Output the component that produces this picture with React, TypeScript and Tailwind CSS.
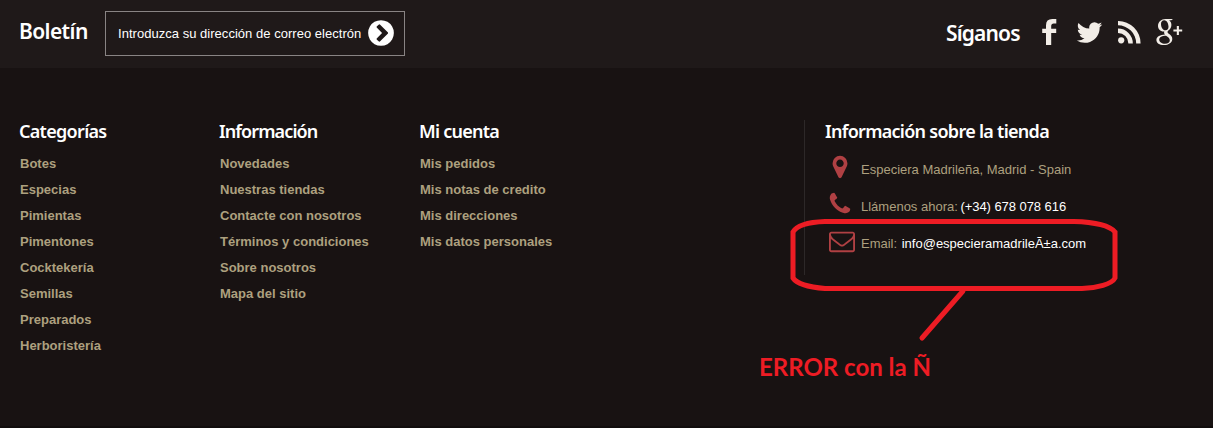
import React from "react";

const HEAD = "font-['Noto_Sans',sans-serif] font-semibold text-white whitespace-nowrap";

function Icon({ d, className }: { d: string; className: string }) {
  return (
    <svg viewBox="0 0 1792 1792" fill="currentColor" className={className}>
      <path d={d} />
    </svg>
  );
}

const CHEVRON =
  "M845 1395l454-454q19-19 19-45t-19-45l-454-454q-19-19-45-19t-45 19l-102 102q-19 19-19 45t19 45l307 307-307 307q-19 19-19 45t19 45l102 102q19 19 45 19t45-19zm819-499q0 209-103 385.5t-279.5 279.5-385.5 103-385.5-103-279.5-279.5-103-385.5 103-385.5 279.5-279.5 385.5-103 385.5 103 279.5 279.5 103 385.5z";
const TWITTER =
  "M1684 408q-67 98-162 167 1 14 1 42 0 130-38 259.5t-115.5 248.5-184.5 210.5-258 146-323 54.5q-271 0-496-145 35 4 78 4 225 0 401-138-105-2-188-64.5t-114-159.5q33 5 61 5 43 0 85-11-112-23-185.5-111.5t-73.5-205.5v-4q68 38 146 41-66-44-105-115t-39-154q0-88 44-163 121 149 294.5 238.5t371.5 99.5q-8-38-8-74 0-134 94.5-228.5t228.5-94.5q140 0 236 102 109-21 205-78-37 115-142 178 93-10 186-50z";
const MARKER =
  "M1152 640q0-106-75-181t-181-75-181 75-75 181 75 181 181 75 181-75 75-181zm256 0q0 109-33 179l-364 774q-16 33-47.5 52t-67.5 19-67.5-19-46.5-52l-365-774q-33-70-33-179 0-212 150-362t362-150 362 150 150 362z";
const PHONE =
  "M1600 1240q0 27-10 70.5t-21 68.5q-21 50-122 106-94 51-186 51-27 0-53-3.5t-57.5-12.5-47-14.5-55.5-20.5-49-18q-98-35-175-83-127-79-264-216t-216-264q-48-77-83-175-3-9-18-49t-20.5-55.5-14.5-47-12.5-57.5-3.5-53q0-92 51-186 56-101 106-122 25-11 68.5-21t70.5-10q14 0 21 3 18 6 53 76 11 19 30 54t35 63.5 31 53.5q3 4 17.5 25t21.5 35.5 7 28.5q0 20-28.5 50t-62 55-62 53-28.5 46q0 9 5 22.5t8.5 20.5 14 24 11.5 19q76 137 174 235t235 174q2 1 19 11.5t24 14 20.5 8.5 22.5 5q18 0 46-28.5t53-62 55-62 50-28.5q14 0 28.5 7t35.5 21.5 25 17.5q25 15 53.5 31t63.5 35 54 30q70 35 76 53 3 7 3 21z";
const ENVELOPE =
  "M1664 1504v-768q-32 36-69 66-268 206-426 338-51 43-83 67t-86.5 48.5-102.5 24.5h-2q-48 0-102.5-24.5t-86.5-48.5-83-67q-158-132-426-338-37-30-69-66v768q0 13 9.5 22.5t22.5 9.5h1472q13 0 22.5-9.5t9.5-22.5zm0-1051v-24.5l-.5-13-3-12.5-5.5-9-9-7.5-14-2.5h-1472q-13 0-22.5 9.5t-9.5 22.5q0 168 147 284 193 152 401 317 6 5 35 29.5t46 37.5 44.5 31.5 50.5 27.5 43 9h2q20 0 43-9t50.5-27.5 44.5-31.5 46-37.5 35-29.5q208-165 401-317 54-43 100.5-115.5t46.5-131.5zm128-37v1088q0 66-47 113t-113 47h-1472q-66 0-113-47t-47-113v-1088q0-66 47-113t113-47h1472q66 0 113 47t47 113z";

function LinkColumn({ title, titleClass, links }: { title: string; titleClass: string; links: string[] }) {
  return (
    <section className="w-[200px] pt-[2px]">
      <h4 className={`${HEAD} text-[18px] leading-[18px] ${titleClass}`}>{title}</h4>
      <ul className="mt-[11px]">
        {links.map((l) => (
          <li key={l} className="h-[26px] whitespace-nowrap text-[13px] leading-[26px] font-bold text-[#ada07f]">
            <a href="#">{l}</a>
          </li>
        ))}
      </ul>
    </section>
  );
}

export default function App() {
  return (
    <footer className="relative h-[428px] w-[1213px] overflow-hidden border-b-2 border-[#110d0d] bg-[#181212] font-['Liberation_Sans',sans-serif]">
      <div className="flex h-[68px] justify-between bg-[#1f1919] pl-5">
        <div className="flex">
          <h4 className={`${HEAD} mt-[16px] -ml-px w-[86px] text-[21px] leading-[30px] tracking-[-0.6px]`}>Boletín</h4>
          <form className="mt-[11px] flex h-[45px] w-[300px] items-center justify-between border border-[#898484] pr-2 pl-3">
            <span className="whitespace-nowrap text-[13px] tracking-[0.03px] text-white">Introduzca su dirección de correo electrón</span>
            <Icon d={CHEVRON} className="mt-[-1px] h-[30px] w-[30px] text-white" />
          </form>
        </div>
        <div className="flex pr-[30px] text-[#f2ede7]">
          <h4 className={`${HEAD} mt-[18px] w-[96px] text-[21px] leading-[30px] tracking-[-0.85px]`}>Síganos</h4>
          <svg viewBox="0 0 15 26" className="mt-[19px] h-[26px] w-[15px]" fill="currentColor">
            <path d="M14.300 .1V4.500H11.700Q9.200 4.500 9.200 7V9.800H14.200V14H9.200V26H4V14H.2V9.800H4V6.200Q4 0 10.300 0Q12.800 0 14.300 .1Z" />
          </svg>
          <Icon d={TWITTER} className="mt-[18px] ml-[18px] h-[29px] w-[29px]" />
          <svg viewBox="0 0 23 23" className="mt-[21px] ml-[14px] h-[23px] w-[23px]" fill="currentColor">
            <circle cx="3.2" cy="19.300" r="3.1" />
            <path d="M0 7.600A14.800 14.800 0 0 1 14.800 22.400H10.400A10.400 10.400 0 0 0 0 12zM0 0A22.400 22.400 0 0 1 22.600 22.400H18.200A18.200 18.200 0 0 0 0 4.300z" />
          </svg>
          <svg viewBox="0 0 27 28" className="mt-[18px] ml-[15px] h-[28px] w-[27px]" fill="currentColor" fillRule="evenodd">
            <path d="M9.500 1H17L15.300 2.300H13.200C15 4 15.400 5.300 15.400 7C15.400 9.700 14 11.200 12.600 12.300C11 13.600 11.200 14.600 12.800 15.800C14.800 17.200 16.300 18.500 16.300 21C16.300 24.500 12.800 27.100 7.800 27.100C3.400 27.100 .4 25.200 .4 22.100C.4 18.400 4.400 16.700 9 16.500C8 15.500 7.900 14.700 8.300 13.500C4.300 13.800 2 11 2 8C2 4 5.200 1 9.500 1ZM8.300 2.200C5.900 2.200 5 4 5 6C5 8.800 6.500 12.300 9.500 12.300C11.600 12.300 12.500 10.800 12.500 8.800C12.500 6 11.100 2.200 8.300 2.200ZM10 17.700C6.200 17.800 3.200 19 3.200 21.500C3.200 24.200 5.700 25.700 9 25.700C12.200 25.700 13.800 24.200 13.800 22.200C13.800 20.300 12.300 19.200 10 17.700Z" />
            <path d="M20.800 8H22.900V11.400H26.200V13.400H22.900V17H20.800V13.400H17.400V11.400H20.800Z" />
          </svg>
        </div>
      </div>

      <div className="flex pt-[52px] pl-5">
        <LinkColumn
          title="Categorías"
          titleClass="-ml-px tracking-[-0.7px]"
          links={["Botes", "Especias", "Pimientas", "Pimentones", "Cocktekería", "Semillas", "Preparados", "Herboristería"]}
        />
        <LinkColumn
          title="Información"
          titleClass="-ml-px tracking-[-0.9px]"
          links={["Novedades", "Nuestras tiendas", "Contacte con nosotros", "Términos y condiciones", "Sobre nosotros", "Mapa del sitio"]}
        />
        <LinkColumn
          title="Mi cuenta"
          titleClass="-ml-px tracking-[-0.75px]"
          links={["Mis pedidos", "Mis notas de credito", "Mis direcciones", "Mis datos personales"]}
        />
        <section className="ml-[184px] h-[155px] border-l border-[#2d2828] pt-[2px] pl-5">
          <h4 className={`${HEAD} text-[18px] leading-[18px] tracking-[-0.72px]`}>Información sobre la tienda</h4>
          <ul className="mt-[8px] whitespace-nowrap text-[13px] text-[#ada07f]">
            <li className="flex h-[37px] pl-1">
              <Icon d={MARKER} className="-ml-[2px] mt-[6px] h-[26px] w-[26px] text-[#b04043]" />
              <span className="ml-2 leading-[43px]">Especiera Madrileña, Madrid - Spain</span>
            </li>
            <li className="flex h-[37px] pl-1">
              <Icon d={PHONE} className="-ml-[2px] mt-[6px] h-[26px] w-[26px] text-[#b04043]" />
              <span className="ml-2 leading-[43px]">
                Llámenos ahora: <span className="-ml-px tracking-[-0.06px] text-white">(+34) 678 078 616</span>
              </span>
            </li>
            <li className="flex h-[37px] pl-1">
              <Icon d={ENVELOPE} className="mt-[6px] h-[26px] w-[26px] text-[#b04043]" />
              <span className="ml-[6px] leading-[43px]">
                Email: <span className="ml-px text-white">info@especieramadrileÃ±a.com</span>
              </span>
            </li>
          </ul>
        </section>
      </div>

      <svg className="absolute top-0 left-0 h-[428px] w-[1213px]" fill="none" stroke="#ed1c24" strokeWidth="5" strokeLinecap="round">
        <path d="M793 232C797 225 810 222 825 221.500H1074C1095 222 1110 226 1115 232V278C1112 284 1097 288 1082 288.500H825C807 287 797 284 793 278Z" />
        <path d="M963 291L922 338" />
      </svg>
      <p className="absolute top-[351px] left-[759px] whitespace-nowrap font-['Lato',sans-serif] text-[24px] leading-[32px] font-bold text-[#ed1c24]">
        ERROR con la Ñ
      </p>
    </footer>
  );
}
